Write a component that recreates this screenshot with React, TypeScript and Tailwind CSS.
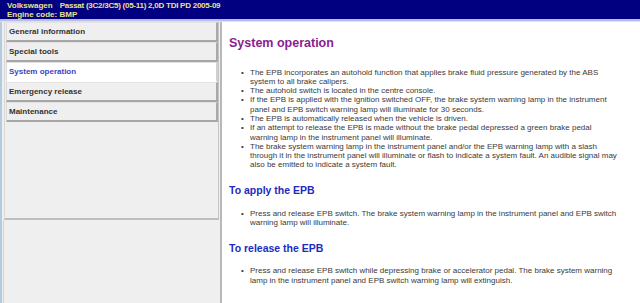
import React from "react";

const navItems = [
  "General information",
  "Special tools",
  "System operation",
  "Emergency release",
  "Maintenance",
];

const sections: { title?: string; items: string[][] }[] = [
  {
    items: [
      [
        "The EPB incorporates an autohold function that applies brake fluid pressure generated by the ABS",
        "system to all brake calipers.",
      ],
      ["The autohold switch is located in the centre console."],
      [
        "If the EPB is applied with the ignition switched OFF, the brake system warning lamp in the instrument",
        "panel and EPB switch warning lamp will illuminate for 30 seconds.",
      ],
      ["The EPB is automatically released when the vehicle is driven."],
      [
        "If an attempt to release the EPB is made without the brake pedal depressed a green brake pedal",
        "warning lamp in the instrument panel will illuminate.",
      ],
      [
        "The brake system warning lamp in the instrument panel and/or the EPB warning lamp with a slash",
        "through it in the instrument panel will illuminate or flash to indicate a system fault. An audible signal may",
        "also be emitted to indicate a system fault.",
      ],
    ],
  },
  {
    title: "To apply the EPB",
    items: [
      [
        "Press and release EPB switch. The brake system warning lamp in the instrument panel and EPB switch",
        "warning lamp will illuminate.",
      ],
    ],
  },
  {
    title: "To release the EPB",
    items: [
      [
        "Press and release EPB switch while depressing brake or accelerator pedal. The brake system warning",
        "lamp in the instrument panel and EPB switch warning lamp will extinguish.",
      ],
    ],
  },
];

function Bullets({ items }: { items: string[][] }) {
  return (
    <ul className="text-[8px] leading-[9.3px] text-[#3a3a3a]">
      {items.map((lines, i) => (
        <li key={i} className="flex">
          <span className="w-[21px] shrink-0 pl-[12px]">•</span>
          <span className="whitespace-nowrap">
            {lines.map((l, j) => (
              <React.Fragment key={j}>
                {l}
                {j < lines.length - 1 && <br />}
              </React.Fragment>
            ))}
          </span>
        </li>
      ))}
    </ul>
  );
}

export default function App() {
  return (
    <div className="w-[640px] h-[303px] overflow-hidden flex flex-col bg-white font-['Liberation_Sans',Arial,sans-serif]">
      {/* Header */}
      <div className="h-[19px] shrink-0 bg-[#000080] px-[7px] pt-[0.5px] text-[8px] leading-[9px] font-bold text-[#ebe28e]">
        <div className="whitespace-nowrap">
          <span>Volkswagen</span>
          <span className="ml-[7px] tracking-[-0.25px]">Passat (3C2/3C5) (05-11) 2,0D TDI PD 2005-09</span>
        </div>
        <div>Engine code: BMP</div>
      </div>
      <div className="h-[2px] shrink-0 bg-[#b9bde3]" />
      <div className="h-[1px] shrink-0 bg-[#dfe0ef]" />

      <div className="flex flex-1 min-h-0">
        {/* Sidebar */}
        <div className="w-[222px] shrink-0 flex bg-[#efefef]">
          <div className="w-[2px] bg-[#b4cade]" />
          <div className="flex-1 flex flex-col border-r-2 border-r-[#b8b8b8]">
            <div className="h-[198px] shrink-0 ml-[2px] mr-[1px] border-l border-l-[#d8d8d8] border-r border-r-[#c4c4c4] border-b-2 border-b-[#bdbdbd] flex flex-col">
              {navItems.map((item) => {
                const active = item === "System operation";
                return (
                  <div
                    key={item}
                    className={`h-[20px] shrink-0 ml-[1px] flex items-center pl-[2px] text-[8px] font-bold border-t border-l border-t-[#e2e2e2] border-l-[#dadada] border-r-2 ${
                      active
                        ? "bg-white text-[#3f3fc4] border-r-[#d0d0d0] border-b border-b-white"
                        : "bg-[#efefef] text-[#333333] border-r-[#a9a9a9] border-b-2 border-b-[#a6a6a6]"
                    }`}
                  >
                    {item}
                  </div>
                );
              })}
            </div>
            <div className="flex-1 ml-[1px] border-l border-l-[#d4d4d4]" />
          </div>
        </div>

        {/* Content */}
        <div className="flex-1 pl-[7px] pt-[13.5px]">
          <h1 className="text-[12.5px] leading-[15px] font-bold text-[#8b1c8f]">System operation</h1>
          <div className="mt-[17px]">
            <Bullets items={sections[0].items} />
          </div>
          {sections.slice(1).map((s) => (
            <div key={s.title} className="mt-[14.5px]">
              <h2 className="text-[10.5px] leading-[13px] font-bold text-[#1d2bbf]">{s.title}</h2>
              <div className="mt-[11.5px]">
                <Bullets items={s.items} />
              </div>
            </div>
          ))}
        </div>
      </div>
    </div>
  );
}
